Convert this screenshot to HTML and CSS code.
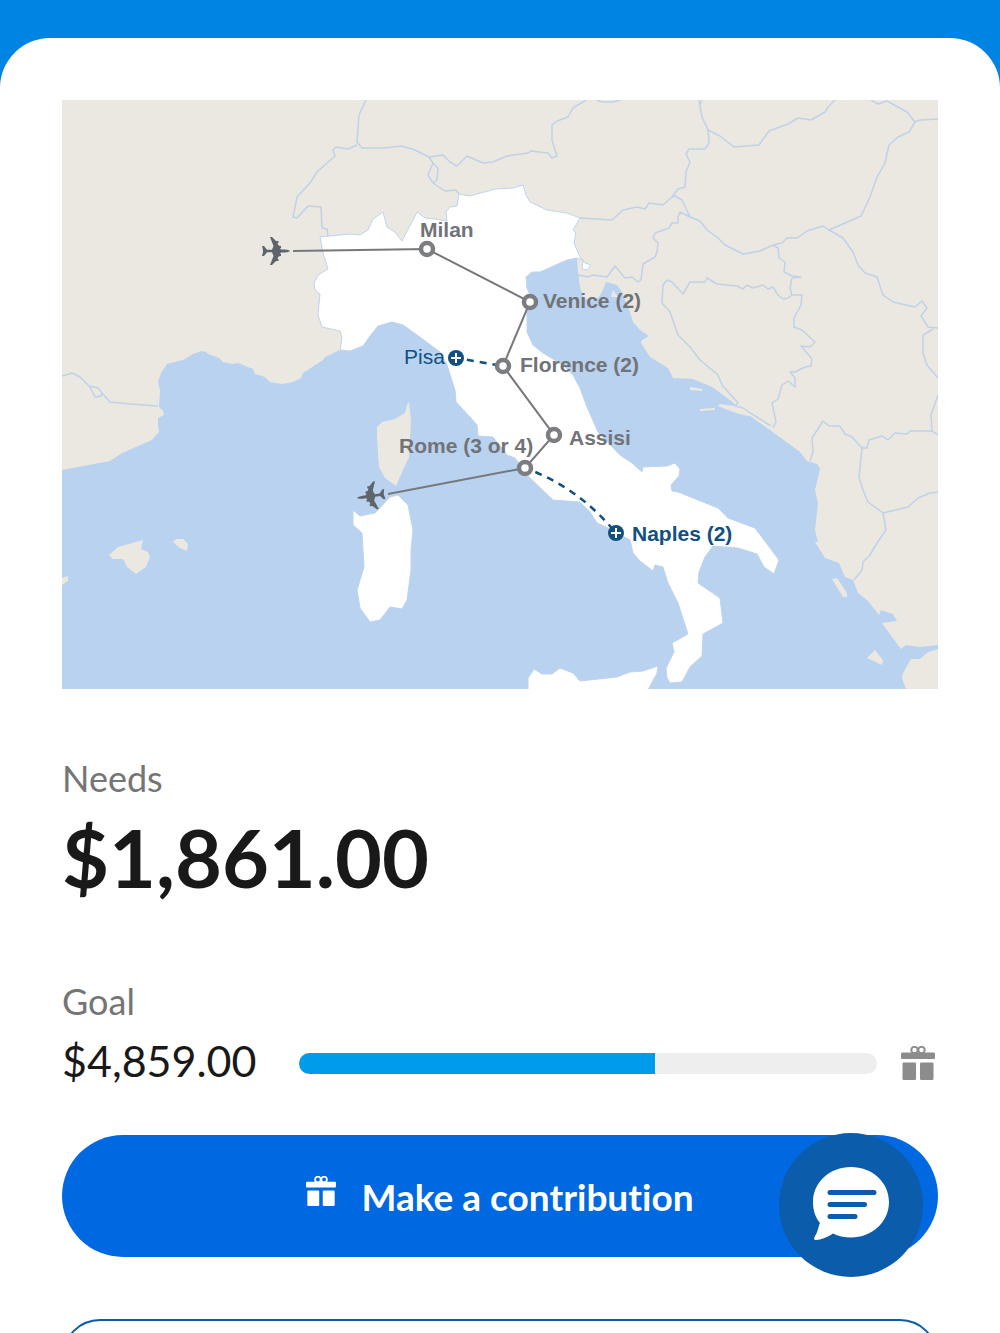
FILE: index.html
```html
<!DOCTYPE html>
<html lang="en">
<head>
<meta charset="utf-8">
<meta name="viewport" content="width=device-width, initial-scale=1">
<title>Italy trip fund</title>
<link rel="stylesheet" href="styles.css">
</head>
<body>
<main class="page">
  <article class="card">
    <svg class="map" viewBox="62 100 876 589" role="img" aria-label="Route map of Italy">
      <defs>
        <path id="plane" d="M14 0C13-1.200 10-1.500 5-1.500L4-3 5-3V-5L2.500-5.500 1.500-8 2.500-8V-10H0L-4-14H-6L-2.500-5-4-1.300H-9L-12-5H-14L-13-1V1L-14 5H-12L-9 1.300H-4L-2.500 5-6 14H-4L0 10H2.500V8H1.500L2.500 5.500 5 5V3H4L5 1.500C10 1.500 13 1.200 14 0Z"/>
      </defs>
      <rect class="sea" x="62" y="100" width="876" height="589"/>
      <g class="land">
        <path d="M62 100V470L110 461 122 453 152 440 159 432 158 426 158 418 164 415 163 411 159 407 160 390 158 382 161 373 167 364 183 360 193 354 202 351 206 352 208 354 219 358 223 362 233 364 238 363 253 369 255 374 265 377 270 382 282 384 293 382 301 378 303 373 323 360 325 357 340 350 400 300 560 255 577 258 578 272 580 287 583 297 590 301 598 298 602 292 606 282 617 285 622 292 630 312 633 322 640 330 649 336 642 340 641 343 650 357 668 368 673 378 693 379 712 387 722 394 736 405 734 406 720 404 718 406 733 412 743 415 750 416 770 430 800 452 807 461 817 464 820 469 815 490 818 503 815 530 818 542 815 542 825 558 839 563 845 577 853 580 858 593 868 601 879 615 881 610 893 614 897 621 882 623 892 637 901 649 906 645 920 647 938 645V100Z"/>
        <path d="M938 649 928 652 920 659 911 659 903 673 902 678 906 689H938Z"/>
        <path d="M409 402 411 420 409 457 403 470 396 486 385 478 379 467 377 437 377 427 382 422 395 419 405 413 407 405Z"/>
        <path d="M109 555 118 547 143 540 141 549 148 552 150 557 146 567 136 574 127 567 123 559 113 559ZM173 542 176 539 183 539 188 544 187 551 180 548ZM62 578 68 576V581L62 585Z"/>
        <path d="M690 387 703 389 702 391 690 390ZM700 409 715 408V410L700 411ZM832 579 837 578 847 593V597H843ZM875 650 883 660 882 665 867 658ZM613 290 618 297 611 297Z"/>
      </g>
      <g class="borders">
        <path d="M366 100 359 115 357 142 362 148 383 148 402 146 415 150 429 157 443 155 450 162 457 166 467 156 483 163 493 162 507 156 528 153 531 151 548 153 552 158 557 156 552 140 552 125 557 121 568 117 573 108 586 100"/>
        <path d="M357 145 348 149 336 147 333 150 335 156 317 172 310 183 297 197 293 217 297 218 308 206 321 207 322 228 327 229 328 236"/>
        <path d="M429 157 433 163 428 175 433 183 445 191 456 190 459 194M433 163 438 168 437 180 433 183"/>
        <path d="M580 218 612 220 623 210 637 207 645 209 649 203 663 205 672 197 678 189 685 187 686 172 690 162 686 154 689 149 705 149 709 143 708 130 702 117 699 100"/>
        <path d="M708 130 720 136 734 147 759 145 769 131 788 124 798 118 811 120 825 112 828 107 835 100"/>
        <path d="M871 100 878 104 887 101 907 112 915 122 920 120 938 119M597 100 602 102 613 102 620 100M702 100 700 105"/>
        <path d="M915 122 909 132 898 137 889 145 885 163 877 177 870 197 861 216 829 230 823 226 807 231 797 238 787 238 782 243 773 245 760 251 743 254 725 245 717 237 707 230 700 221 690 217 682 200 675 196 672 197"/>
        <path d="M690 217 680 212 678 217 678 223 672 223 669 228 655 233 653 238 658 243 657 252 655 257 643 264 641 280 638 282 632 277 625 278 615 266 607 277 593 275 588 277 578 275"/>
        <path d="M662 303 663 285 667 280 672 282 683 294 690 282 705 282 707 278 717 284 737 286 743 289 747 285 753 288 763 285 768 289 773 287 778 295 783 299 788 298 792 295 802 295 801 305 794 318 794 327 802 330 815 342 810 347 801 346 812 359 811 366 805 367 795 372 790 372 795 378 795 387 788 381 782 385 778 399 772 403 776 422 773 428"/>
        <path d="M662 303 670 312 678 335 690 347 700 360 718 375 722 385 738 403 735 406 743 408 755 416 771 426"/>
        <path d="M773 245 778 248 779 258 785 262 784 272 792 276 801 277 792 278 790 288 792 295"/>
        <path d="M829 230 843 238 853 252 858 265 865 273 877 277 883 295 893 302 915 307 922 301 927 308 921 316 928 327 938 328M933 329 923 335 923 353 927 365 938 378"/>
        <path d="M810 461 813 452 812 438 823 421 829 426 840 426 845 434 852 437 862 448 867 448 869 440 882 436 888 440 895 433 907 434 910 431 932 431 938 435M932 431 931 415 938 395"/>
        <path d="M862 448 859 477 863 490 868 502 883 513 908 507 918 498 930 493 938 492M883 513 886 530 877 543 870 555 863 562 862 570 854 580"/>
        <path d="M62 376 72 373 80 377 90 387 95 397 101 396 102 393 98 388 90 386M102 393 110 402 130 404 158 406"/>
      </g>
      <g class="italy">
        <path d="M340 350 342 338 340 331 322 327 318 315 320 294 315 290 314 283 318 275 328 269 323 253 320 237 350 234 360 235 368 230 373 219 383 212 387 227 395 232 402 241 405 235 413 220 417 212 425 218 435 219 447 221 446 212 450 207 457 206 459 194 470 196 495 189 513 188 523 185 526 195 530 202 547 210 567 213 580 218 573 230 576 233 574 243 580 257 585 263 591 265 587 270 582 269 583 260 577 258 567 260 540 272 532 272 526 277 527 288 530 295 527 312 527 332 533 345 543 353 563 365 573 375 580 388 587 407 598 432 620 455 632 463 642 472 643 467 667 466 675 463 680 469 679 476 671 485 672 491 678 492 718 508 728 518 755 528 770 548 779 560 774 574 764 567 757 554 738 548 713 546 705 557 699 572 698 583 720 598 723 623 703 634 702 656 690 667 682 682 670 683 667 678 666 668 674 652 672 643 688 634 678 603 668 583 663 567 655 565 653 571 640 561 633 553 630 540 608 528 597 523 590 512 580 502 553 500 530 478 515 458 507 455 493 437 478 436 477 425 470 417 456 402 455 390 447 365 440 352 417 335 403 325 392 322 378 326 370 336 363 346 350 351Z"/>
        <path d="M353 510 360 516 375 513 390 497 398 495 408 505 413 530 411 550 411 570 407 600 402 609 390 607 380 620 370 622 360 608 357 590 364 567 362 533 353 525Z"/>
        <path d="M528 690 528 678 534 669 542 674 552 674 560 668 573 673 580 681 617 677 630 672 643 671 658 666 657 673 648 690Z"/>
      </g>
      <path class="route" d="M293 251 427 249 530 302 503 366 554 435 525 468 388 494"/>
      <path class="optional" d="M456 358 503 366"/>
      <path class="optional" d="M525 468Q578 487 616 533"/>
      <g class="stops">
        <circle cx="427" cy="249" r="6"/><circle cx="530" cy="302" r="6"/><circle cx="503" cy="366" r="6"/>
        <circle cx="554" cy="435" r="6"/><circle cx="525" cy="468" r="6"/>
      </g>
      <g class="extras">
        <circle cx="456" cy="358" r="8"/><path d="M451 358H461M456 353V363"/>
        <circle cx="616" cy="533" r="8"/><path d="M611 533H621M616 528V538"/>
      </g>
      <use class="plane" href="#plane" transform="translate(276 251)"/>
      <use class="plane" href="#plane" transform="translate(371 496) rotate(172)"/>
      <g class="labels">
        <text x="420" y="237">Milan</text>
        <text x="543" y="308">Venice (2)</text>
        <text x="520" y="372">Florence (2)</text>
        <text x="569" y="445">Assisi</text>
        <text x="399" y="453">Rome (3 or 4)</text>
        <text class="label-extra" x="632" y="541">Naples (2)</text>
        <text class="label-extra label-light" x="404" y="364">Pisa</text>
      </g>
    </svg>

    <section class="needs">
      <h2 class="label">Needs</h2>
      <p class="needs-amount">$1,861.00</p>
    </section>

    <section class="goal">
      <h2 class="label" id="goal-label">Goal</h2>
      <div class="goal-row">
        <p class="goal-amount">$4,859.00</p>
        <progress class="bar" value="2998" max="4859" aria-labelledby="goal-label"></progress>
        <svg class="gift" viewBox="0 0 34 34" aria-hidden="true">
          <g class="gift-bow"><circle cx="13.500" cy="4" r="3.200"/><circle cx="20.500" cy="4" r="3.200"/></g>
          <rect y="6.500" width="34" height="6.500" rx="1.200"/>
          <rect x="1.500" y="16.500" width="13.500" height="17.500" rx="1.200"/>
          <rect x="19" y="16.500" width="13.500" height="17.500" rx="1.200"/>
        </svg>
      </div>
    </section>

    <div class="actions">
      <button class="btn btn-primary" type="button">
        <svg class="gift gift-small" viewBox="0 0 34 34" aria-hidden="true">
          <g class="gift-bow"><circle cx="13.500" cy="4" r="3.200"/><circle cx="20.500" cy="4" r="3.200"/></g>
          <rect y="6.500" width="34" height="6.500" rx="1.200"/>
          <rect x="1.500" y="16.500" width="13.500" height="17.500" rx="1.200"/>
          <rect x="19" y="16.500" width="13.500" height="17.500" rx="1.200"/>
        </svg>
        <span>Make a contribution</span>
      </button>
      <button class="btn btn-outline" type="button" aria-label="Share"></button>
    </div>
  </article>
</main>

<button class="chat" type="button" aria-label="Open chat">
  <svg class="chat-icon" viewBox="0 0 78 76" aria-hidden="true">
    <path class="bubble" d="M39 0C60 0 77 15 77 35S60 70.500 39 70.500C32 70.500 26 69 21 66.500 16 70 9 73 4 73 1.500 73 2 71 3 69 6 65 6 60 8 56 3 50 1 43 1 35 1 15 18 0 39 0Z"/>
    <path class="lines" d="M18 25.500H62M18 37.500H52.500M18 49.500H43"/>
  </svg>
</button>
</body>
</html>
```
FILE: styles.css
```css
* {
  box-sizing: border-box;
}

body {
  margin: 0;
  background: #0084e3;
  color: #191919;
  font-family: Lato, "Liberation Sans", sans-serif;
  font-variant-ligatures: none;
}

h2,
p {
  margin: 0;
}

.page {
  height: 100vh;
  padding-top: 38px;
  overflow-y: auto;
  scrollbar-width: none;
}

.card {
  padding: 62px;
  border-radius: 50px 50px 0 0;
  background: #fff;
}

/* Route map */
.map {
  display: block;
  width: 100%;
  height: auto;
}

.sea {
  fill: #b9d2ef;
}

.land {
  fill: #ebe8e1;
}

.borders {
  fill: none;
  stroke: #c0d2e7;
  stroke-width: 1.5;
  stroke-linejoin: round;
}

.italy {
  fill: #fff;
  stroke: #bfd4ed;
  stroke-width: 1;
  stroke-linejoin: round;
}

.route {
  fill: none;
  stroke: #77787b;
  stroke-width: 2;
}

.optional {
  fill: none;
  stroke: #12507f;
  stroke-width: 2.5;
  stroke-dasharray: 7 6;
  stroke-dashoffset: 2;
}

.stops {
  fill: #fff;
  stroke: #7c7d80;
  stroke-width: 4.5;
}

.extras {
  fill: #12507f;
  stroke: #fff;
  stroke-width: 2;
}

.extras circle {
  stroke: none;
}

.plane {
  fill: #5d646c;
}

.labels {
  fill: #717377;
  font-family: "Liberation Sans", Arial, sans-serif;
  font-size: 21px;
  font-weight: 700;
}

.label-extra {
  fill: #12507f;
}

.label-light {
  font-weight: 400;
}

/* Amounts */
.needs {
  margin-top: 67px;
}

.label {
  color: #757575;
  font-size: 36px;
  font-weight: 400;
  line-height: 44px;
}

.needs-amount {
  margin-top: 9px;
  font-size: 81px;
  font-weight: 700;
  line-height: 96px;
}

.goal {
  margin-top: 74px;
}

.goal-row {
  display: flex;
  align-items: center;
  margin-top: 10px;
}

.goal-amount {
  padding-bottom: 4px;
  font-size: 43px;
  line-height: 56px;
}

.bar {
  flex: 1;
  height: 21px;
  margin: 0 24px 0 42px;
  border: 0;
  border-radius: 11px;
  overflow: hidden;
  background: #eee;
  appearance: none;
}

.bar::-webkit-progress-bar {
  background: #eee;
}

.bar::-webkit-progress-value {
  background: #009ceb;
}

.bar::-moz-progress-bar {
  background: #009ceb;
}

.gift {
  flex: none;
  width: 34px;
  margin-right: 3px;
  fill: #8c8c8c;
}

.gift-bow {
  fill: none;
  stroke: #8c8c8c;
  stroke-width: 2;
}

/* Actions */
.actions {
  display: grid;
  gap: 62px;
  margin-top: 42px;
}

.btn {
  width: 100%;
  font: inherit;
  cursor: pointer;
}

.btn-primary {
  display: flex;
  align-items: center;
  justify-content: center;
  gap: 25px;
  min-height: 122px;
  border: 0;
  border-radius: 61px;
  background: #0068e1;
  color: #fff;
  font-size: 37px;
  font-weight: 700;
}

.gift-small {
  width: 30px;
  margin: 0 0 10px;
  fill: #fff;
}

.gift-small .gift-bow {
  stroke: #fff;
}

.btn-outline {
  min-height: 76px;
  border: 2px solid #0b5cab;
  border-radius: 38px;
  background: #fff;
}

/* Floating chat launcher */
.chat {
  position: fixed;
  right: 77px;
  bottom: 56px;
  display: grid;
  place-items: center;
  width: 144px;
  height: 144px;
  padding: 0;
  border: 0;
  border-radius: 50%;
  background: #0b5cab;
  cursor: pointer;
}

.chat-icon {
  width: 78px;
}

.bubble {
  fill: #fff;
}

.lines {
  stroke: #0b5cab;
  stroke-width: 5;
  stroke-linecap: round;
}
```
